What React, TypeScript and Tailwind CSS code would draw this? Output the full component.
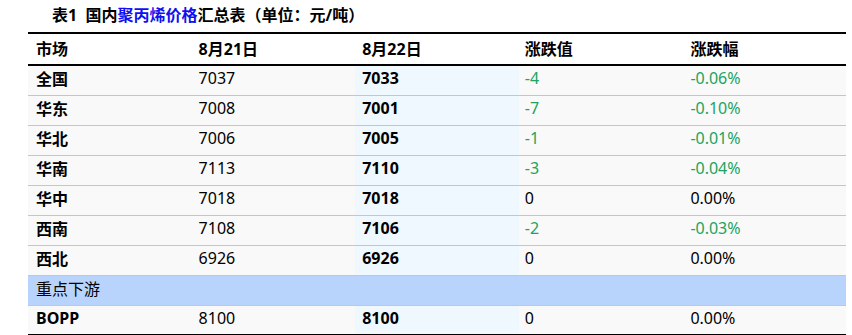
const rows = [
  { m: "全国", a: "7037", b: "7033", d: "-4", p: "-0.06%" },
  { m: "华东", a: "7008", b: "7001", d: "-7", p: "-0.10%" },
  { m: "华北", a: "7006", b: "7005", d: "-1", p: "-0.01%" },
  { m: "华南", a: "7113", b: "7110", d: "-3", p: "-0.04%" },
  { m: "华中", a: "7018", b: "7018", d: "0", p: "0.00%" },
  { m: "西南", a: "7108", b: "7106", d: "-2", p: "-0.03%" },
  { m: "西北", a: "6926", b: "6926", d: "0", p: "0.00%" },
];

function Row({ m, a, b, d, p }: { m: string; a: string; b: string; d: string; p: string }) {
  const tone = d.startsWith("-") ? "text-[#22a35d]" : "text-black";
  return (
    <tr className="h-[30px] border-b border-[#c6c6c6] align-top">
      <td className="px-2 pt-[2px] font-bold">{m}</td>
      <td className="px-[7px] pt-[1px]">{a}</td>
      <td className="px-[7px] pt-[1px] font-bold bg-[#f0f8ff]">{b}</td>
      <td className={`px-[6px] pt-[1px] ${tone}`}>{d}</td>
      <td className={`px-2 pt-[1px] ${tone}`}>{p}</td>
    </tr>
  );
}

export default function App() {
  return (
    <div className="w-[852px] h-[335px] bg-white overflow-hidden font-['Noto_Sans','Noto_Sans_CJK_SC',sans-serif] text-black">
      <div className="pl-[52px] pt-[4px] h-[32px] text-[16px] font-bold leading-[22px]">
        表1&nbsp; 国内<span className="text-[#1010f0]">聚丙烯价格</span>汇总表（单位：元/吨）
      </div>
      <div className="pl-[28px] pr-[6px]">
        <table className="w-full table-fixed border-collapse bg-[#f9f9f9] text-[16px] leading-[22px]">
          <thead>
            <tr className="h-[32px] border-t-2 border-b-2 border-black bg-white font-bold">
              <th className="px-2 text-left font-bold">市场</th>
              <th className="px-[7px] text-left font-bold">8月21日</th>
              <th className="px-[7px] text-left font-bold">8月22日</th>
              <th className="px-[6px] text-left font-bold">涨跌值</th>
              <th className="px-2 text-left font-bold">涨跌幅</th>
            </tr>
          </thead>
          <tbody>
            {rows.map((r) => (
              <Row key={r.m} {...r} />
            ))}
            <tr className="h-[30px] border-b border-[#c6c6c6] bg-[#b8d4fc] align-top">
              <td colSpan={5} className="px-2 pt-[2px]">重点下游</td>
            </tr>
            <tr className="h-[30px] border-b-2 border-black align-top">
              <td className="px-2 pt-[1px] font-bold">BOPP</td>
              <td className="px-[7px] pt-[1px]">8100</td>
              <td className="px-[7px] pt-[1px] font-bold bg-[#f0f8ff]">8100</td>
              <td className="px-[6px] pt-[1px]">0</td>
              <td className="px-2 pt-[1px]">0.00%</td>
            </tr>
          </tbody>
        </table>
      </div>
    </div>
  );
}
